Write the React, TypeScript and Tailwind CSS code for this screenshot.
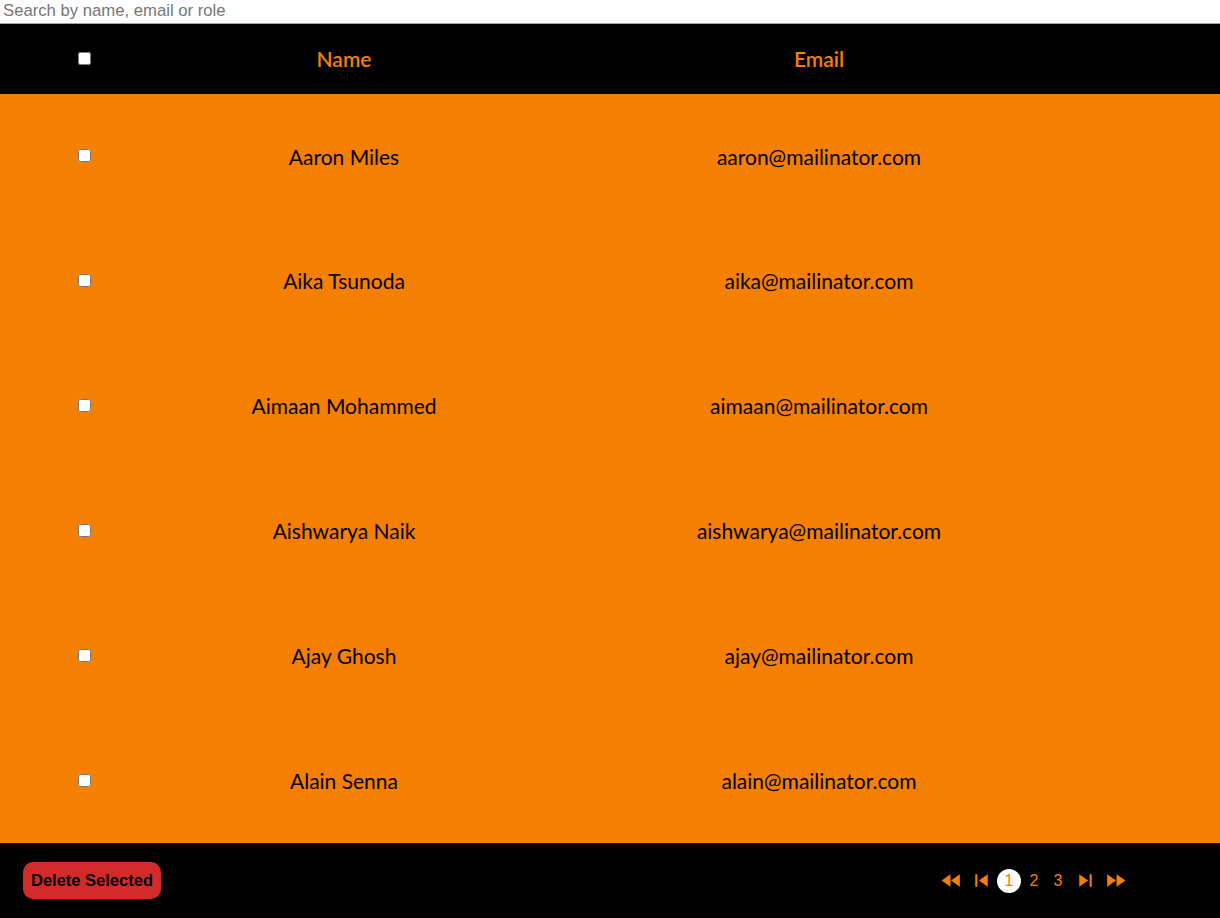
import { MdFastForward, MdFastRewind, MdSkipNext, MdSkipPrevious } from 'react-icons/md';

const USERS = [
  { name: 'Aaron Miles', email: 'aaron@mailinator.com' },
  { name: 'Aika Tsunoda', email: 'aika@mailinator.com' },
  { name: 'Aimaan Mohammed', email: 'aimaan@mailinator.com' },
  { name: 'Aishwarya Naik', email: 'aishwarya@mailinator.com' },
  { name: 'Ajay Ghosh', email: 'ajay@mailinator.com' },
  { name: 'Alain Senna', email: 'alain@mailinator.com' },
];

const COLS = 'grid grid-cols-[168px_352px_598px_1fr]';

const App: React.FC = () => {
  return (
    <div className="flex h-[918px] w-full flex-col bg-white font-['Lato',sans-serif]">
      <input
        type="text"
        placeholder="Search by name, email or role"
        className="h-6 w-full border-b border-gray-400 px-[3px] pb-[2px] font-['Liberation_Sans',Arial,sans-serif] text-[16.7px] text-black outline-none placeholder:text-[#757575]"
      />
      <div className={`${COLS} h-[70px] items-center bg-black text-[21px] text-[#f57f00]`}>
        <div className="flex justify-center pb-[2px]">
          <input type="checkbox" className="h-[13px] w-[13px]" />
        </div>
        <div className="text-center font-semibold">Name</div>
        <div className="text-center font-semibold">Email</div>
        <div />
      </div>
      <div className="flex flex-1 flex-col bg-[#f57f00]">
        {USERS.map((user) => (
          <div key={user.email} className={`${COLS} flex-1 items-center text-[21px] text-black`}>
            <div className="flex justify-center pb-[1px]">
              <input type="checkbox" className="h-[13px] w-[13px]" />
            </div>
            <div className="text-center">{user.name}</div>
            <div className="text-center">{user.email}</div>
            <div />
          </div>
        ))}
      </div>
      <div className="flex h-[75px] items-center justify-between bg-black pl-[23px] pr-[92px]">
        <button className="h-[37px] rounded-[10px] bg-[#d32a2a] px-2 font-['Liberation_Sans',Arial,sans-serif] text-[16.5px] font-bold text-black">
          Delete Selected
        </button>
        <div className="flex items-center font-['Liberation_Sans',Arial,sans-serif] text-[#f57f00]">
          <MdFastRewind className="h-[25px] w-[25px]" />
          <MdSkipPrevious className="ml-[5px] h-[25px] w-[25px]" />
          <span className="ml-[3px] flex h-6 w-6 items-center justify-center rounded-full bg-white text-base">1</span>
          <span className="ml-[4px] w-[18px] text-center text-base">2</span>
          <span className="ml-[6px] w-[18px] text-center text-base">3</span>
          <MdSkipNext className="ml-[6px] h-[25px] w-[25px]" />
          <MdFastForward className="ml-[5px] h-[25px] w-[25px]" />
        </div>
      </div>
    </div>
  );
};

export default App;
